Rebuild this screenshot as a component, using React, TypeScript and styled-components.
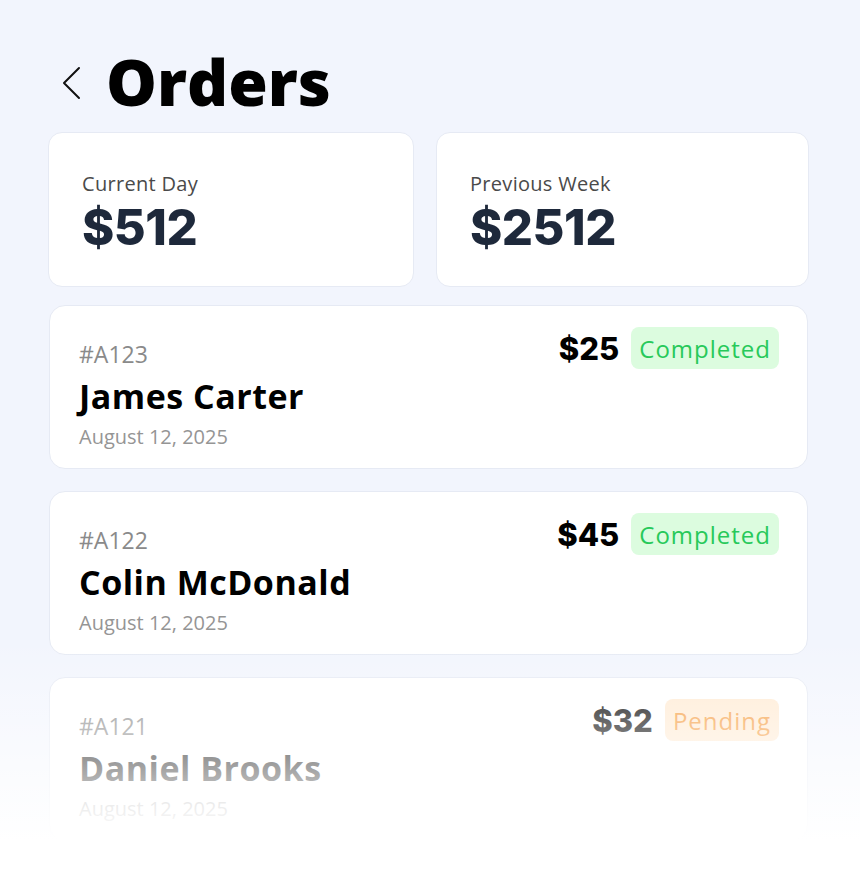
import React from "react";
import styled, { createGlobalStyle } from "styled-components";

type Status = "Completed" | "Pending";

interface Order {
  id: string;
  name: string;
  date: string;
  amount: number;
  status: Status;
}

const orders: Order[] = [
  { id: "A123", name: "James Carter", date: "August 12, 2025", amount: 25, status: "Completed" },
  { id: "A122", name: "Colin McDonald", date: "August 12, 2025", amount: 45, status: "Completed" },
  { id: "A121", name: "Daniel Brooks", date: "August 12, 2025", amount: 32, status: "Pending" }
];

const stats = [
  { label: "Current Day", value: "$512" },
  { label: "Previous Week", value: "$2512" }
];

const GlobalStyle = createGlobalStyle`
  * { box-sizing: border-box; }
  body {
    margin: 0;
    background: #f2f5fd;
    font-family: "Open Sans", "DejaVu Sans", sans-serif;
  }
`;

const BackIcon = () => (
  <svg width="20" height="34" viewBox="0 0 20 34" fill="none">
    <path d="M17 2 L2 17 L17 32" stroke="#111" strokeWidth="2" strokeLinecap="round" strokeLinejoin="round" />
  </svg>
);

const App = () => {
  return (
    <>
      <GlobalStyle />
      <Page>
        <Header>
          <BackButton aria-label="Back">
            <BackIcon />
          </BackButton>
          <Title>Orders</Title>
        </Header>

        <StatGrid>
          {stats.map((s) => (
            <StatCard key={s.label}>
              <StatLabel>{s.label}</StatLabel>
              <StatValue>{s.value}</StatValue>
            </StatCard>
          ))}
        </StatGrid>

        <OrderList>
          {orders.map((o) => (
            <OrderCard key={o.id}>
              <OrderInfo>
                <OrderId>#{o.id}</OrderId>
                <OrderName>{o.name}</OrderName>
                <OrderDate>{o.date}</OrderDate>
              </OrderInfo>
              <OrderMeta>
                <Amount>${o.amount}</Amount>
                <Badge $status={o.status}>{o.status}</Badge>
              </OrderMeta>
            </OrderCard>
          ))}
        </OrderList>
        <Fade />
      </Page>
    </>
  );
};

const Page = styled.div`
  position: relative;
  width: 860px;
  height: 876px;
  overflow: hidden;
  padding: 44px 51px 0 48px;
`;

const Header = styled.div`
  display: flex;
  align-items: center;
  gap: 24px;
  padding-left: 14px;
  height: 78px;
`;

const BackButton = styled.button`
  display: flex;
  align-items: center;
  padding: 0;
  border: 0;
  background: none;
  cursor: pointer;
`;

const Title = styled.h1`
  margin: 0 0 2px;
  font-family: "Open Sans", sans-serif;
  font-weight: 800;
  font-size: 64px;
  line-height: 1;
  color: #000;
`;

const StatGrid = styled.div`
  display: grid;
  grid-template-columns: 366px 1fr;
  gap: 22px;
  margin-top: 10px;
`;

const StatCard = styled.div`
  height: 155px;
  background: #fff;
  border: 1px solid #e6eaf4;
  border-radius: 14px;
  padding: 38px 33px 0;
`;

const StatLabel = styled.div`
  font-size: 20px;
  line-height: 26px;
  letter-spacing: 0.3px;
  color: #4a4a4a;
`;

const StatValue = styled.div`
  margin-top: 4px;
  font-family: Inter, sans-serif;
  font-weight: 800;
  font-size: 49px;
  line-height: 54px;
  letter-spacing: -0.5px;
  color: #1e293b;
`;

const OrderList = styled.div`
  display: flex;
  flex-direction: column;
  gap: 22px;
  margin-top: 18px;
  padding: 0 1px;
`;

const OrderCard = styled.div`
  display: flex;
  justify-content: space-between;
  align-items: flex-start;
  height: 164px;
  background: #fff;
  border: 1px solid #e6eaf4;
  border-radius: 16px;
  padding: 21px 28px 0 29px;
`;

const OrderInfo = styled.div`
  display: flex;
  flex-direction: column;
  padding-top: 12px;
`;

const OrderId = styled.div`
  font-size: 23px;
  line-height: 30px;
  color: #8a8a8a;
`;

const OrderName = styled.div`
  margin-top: 9px;
  font-weight: 700;
  font-size: 34px;
  line-height: 36px;
  letter-spacing: 0.5px;
  color: #000;
`;

const OrderDate = styled.div`
  margin-top: 10px;
  font-size: 20px;
  line-height: 26px;
  color: #959595;
`;

const OrderMeta = styled.div`
  display: flex;
  align-items: center;
  gap: 12px;
`;

const Amount = styled.div`
  font-family: Inter, sans-serif;
  font-weight: 800;
  font-size: 31px;
  color: #000;
`;

const Badge = styled.div<{ $status: Status }>`
  height: 42px;
  display: flex;
  align-items: center;
  padding: 0 8px;
  border-radius: 8px;
  font-size: 24px;
  letter-spacing: 1px;
  background: ${({ $status }) => ($status === "Completed" ? "#dcfcdf" : "#ffead2")};
  color: ${({ $status }) => ($status === "Completed" ? "#27c95a" : "#f59a3c")};
`;

const Fade = styled.div`
  position: absolute;
  left: 0;
  right: 0;
  top: 640px;
  bottom: 0;
  pointer-events: none;
  background: linear-gradient(
    to bottom,
    rgba(255, 255, 255, 0) 0,
    rgba(255, 255, 255, 1) 200px
  );
`;

export default App;
